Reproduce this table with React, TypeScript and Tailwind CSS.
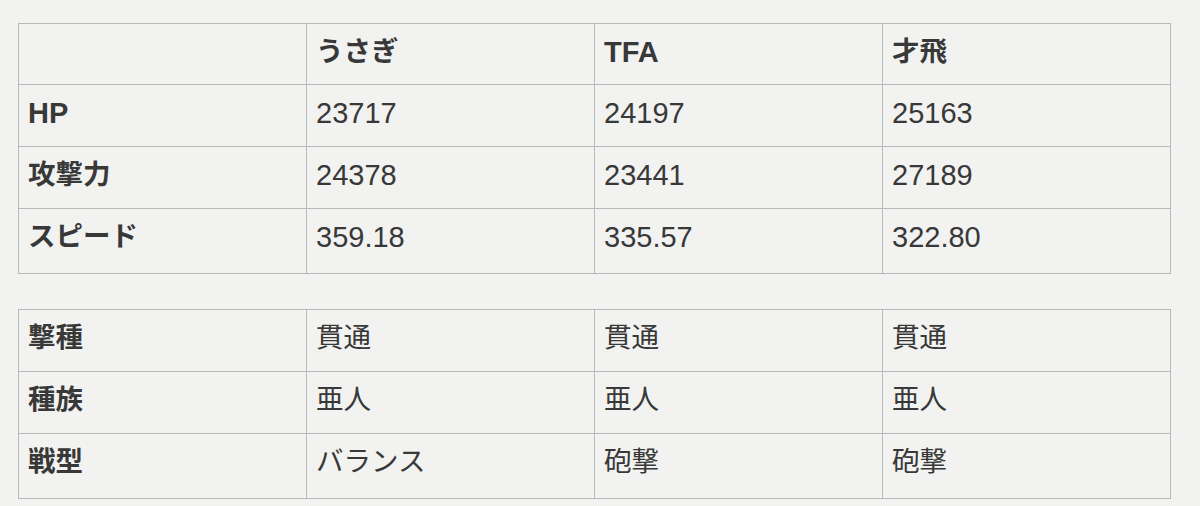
const font = {
  fontFamily: '"Liberation Sans", "Noto Sans CJK JP", sans-serif',
};

const stats = [
  { label: "HP", values: ["23717", "24197", "25163"] },
  { label: "攻撃力", values: ["24378", "23441", "27189"] },
  { label: "スピード", values: ["359.18", "335.57", "322.80"] },
];

const traits = [
  { label: "撃種", values: ["貫通", "貫通", "貫通"] },
  { label: "種族", values: ["亜人", "亜人", "亜人"] },
  { label: "戦型", values: ["バランス", "砲撃", "砲撃"] },
];

const cell = "border border-[#b8b8b8] align-top pl-[9px] pr-2 pt-[10px] text-[29px] leading-[36px] text-[#383838]";

// Japanese glyphs in the shot run a bit smaller and sit higher than the latin ones
function Txt({ t }: { t: string }) {
  const cjk = /[^\x00-\x7f]/.test(t);
  return <span className={cjk ? "text-[27.5px] align-[4px]" : ""}>{t}</span>;
}

function Row({ label, values, last }: { label: string; values: string[]; last?: boolean }) {
  const h = last ? "h-[65px]" : "h-[62px]";
  return (
    <tr className={h}>
      <td className={`${cell} font-bold`}><Txt t={label} /></td>
      {values.map((v, i) => (
        <td key={i} className={cell}><Txt t={v} /></td>
      ))}
    </tr>
  );
}

export default function App() {
  return (
    <div className="w-[1200px] h-[506px] bg-[#f2f2f1] pt-[23px] pl-[18px] overflow-hidden" style={font}>
      <table className="border-collapse table-fixed w-[1152px]">
        <colgroup>
          <col className="w-[288px]" />
          <col className="w-[288px]" />
          <col className="w-[288px]" />
          <col className="w-[288px]" />
        </colgroup>
        <tbody>
          <tr className="h-[61px]">
            <td className={cell}></td>
            <td className={`${cell} font-bold pt-[8px]`}><Txt t="うさぎ" /></td>
            <td className={`${cell} font-bold pt-[8px]`}><Txt t="TFA" /></td>
            <td className={`${cell} font-bold pt-[8px]`}><Txt t="才飛" /></td>
          </tr>
          {stats.map((r, i) => (
            <Row key={r.label} label={r.label} values={r.values} last={i === stats.length - 1} />
          ))}
        </tbody>
      </table>

      <table className="border-collapse table-fixed w-[1152px] mt-[35px]">
        <colgroup>
          <col className="w-[288px]" />
          <col className="w-[288px]" />
          <col className="w-[288px]" />
          <col className="w-[288px]" />
        </colgroup>
        <tbody>
          {traits.map((r, i) => (
            <Row key={r.label} label={r.label} values={r.values} last={i === traits.length - 1} />
          ))}
        </tbody>
      </table>
    </div>
  );
}
